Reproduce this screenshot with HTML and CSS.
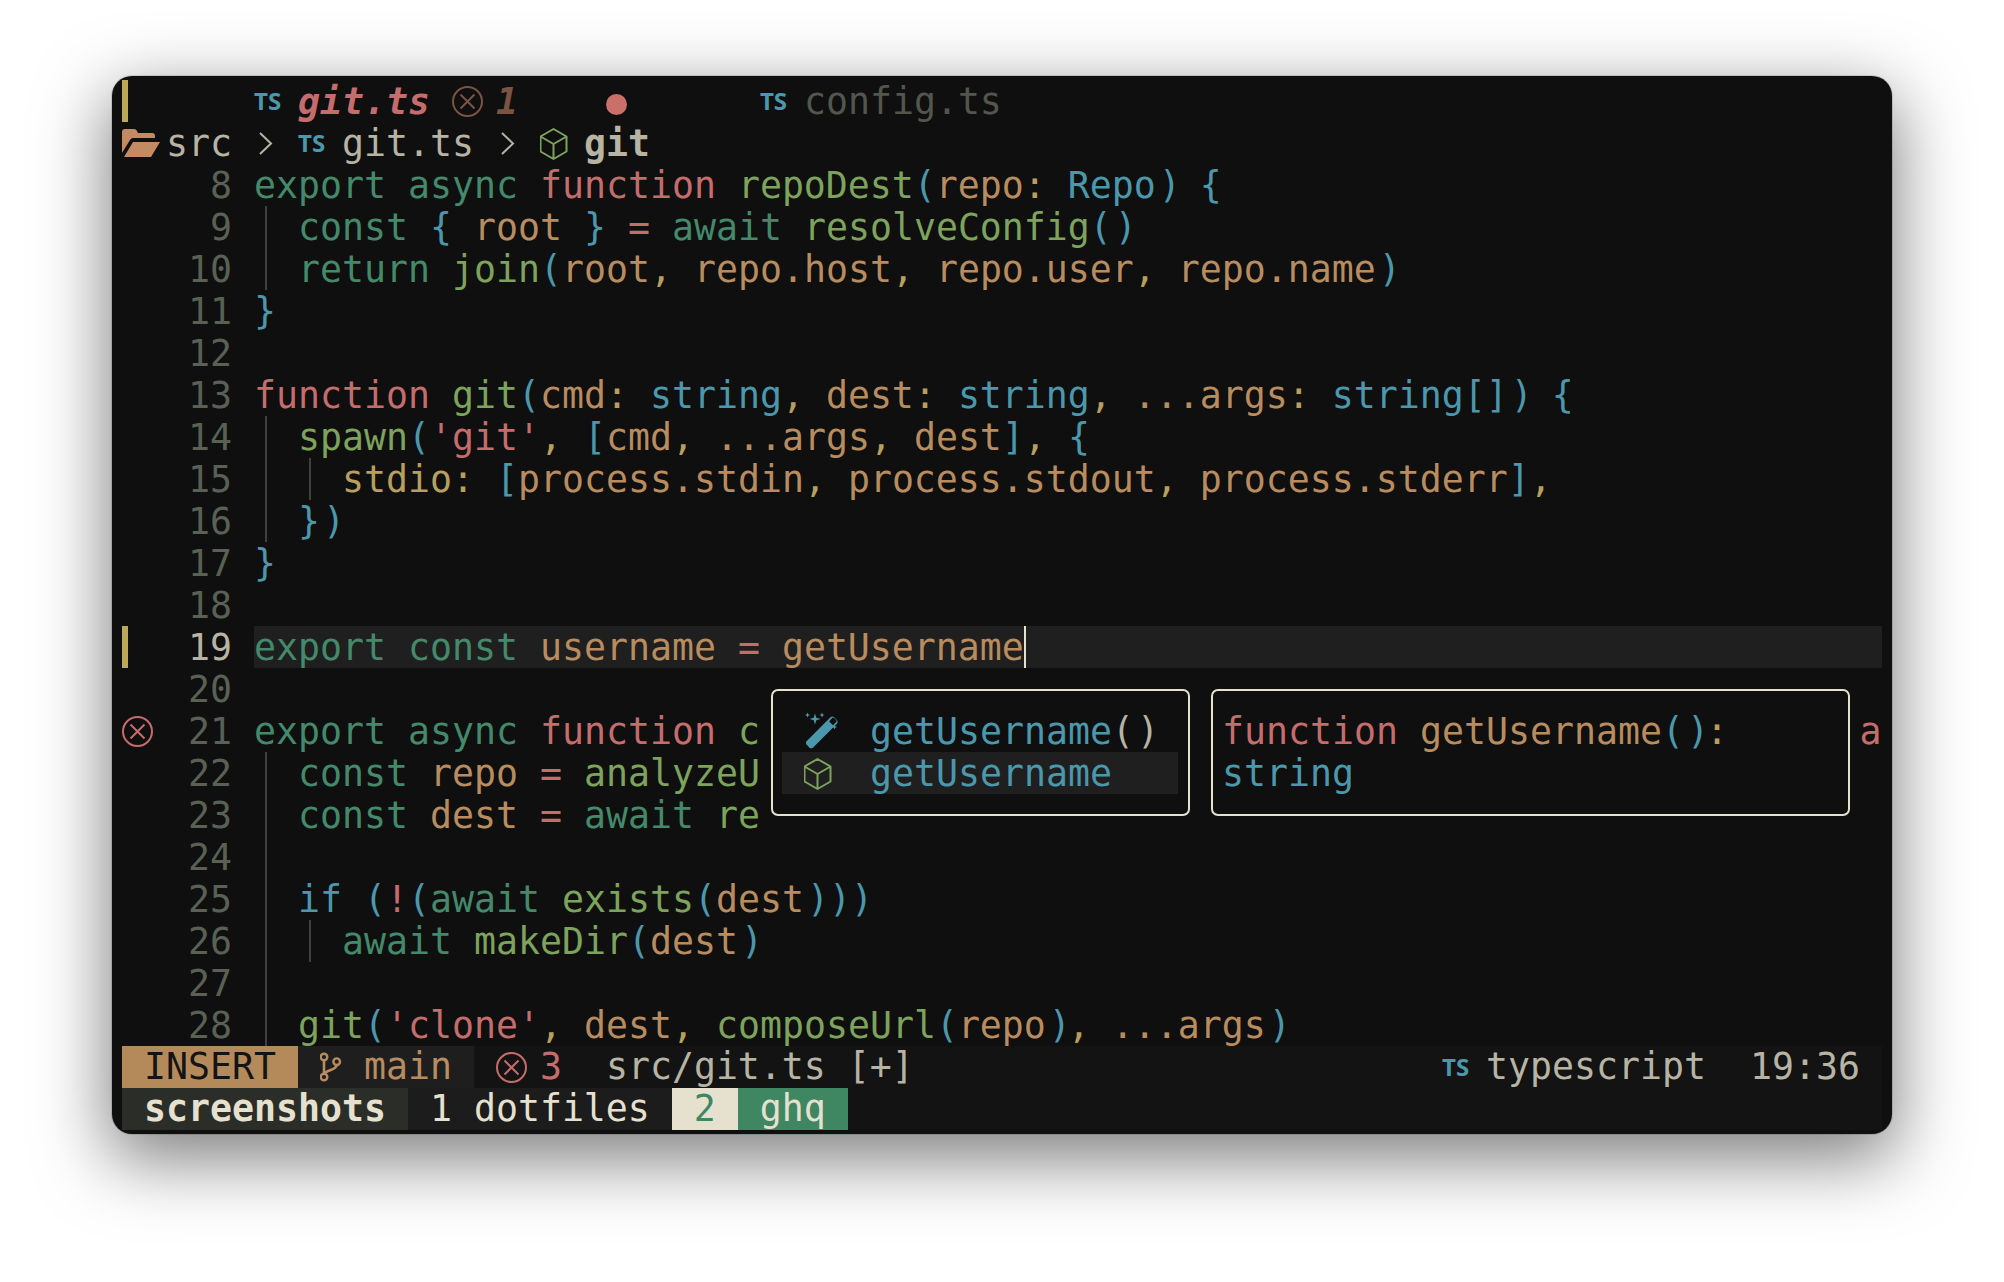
FILE: index.html
```html
<!DOCTYPE html>
<html lang="en">
<head>
<meta charset="utf-8">
<title>git.ts</title>
<link rel="stylesheet" href="styles.css">
</head>
<body>
<main class="window">
  <svg class="defs" width="0" height="0" aria-hidden="true">
    <defs>
      <g id="err"><circle cx="15.5" cy="21.5" r="14.5" fill="none" stroke="currentColor" stroke-width="2"/><path d="M8.500 14.500L22.500 28.500M22.500 14.500L8.500 28.500" fill="none" stroke="currentColor" stroke-width="2"/></g>
      <g id="cube"><path d="M13.5 1L26.5 8.5V23.5L13.5 31L.5 23.5V8.5ZM.5 8.5L13.5 16L26.5 8.5M13.5 16V31" fill="none" stroke="currentColor" stroke-width="2" stroke-linejoin="round"/></g>
      <path id="chev" d="M6 11L17 21.5L6 32" fill="none" stroke="currentColor" stroke-width="2"/>
    </defs>
  </svg>
  <div class="grid">
    <div class="row">
      <span class="sign"><span class="bar"></span></span><span class="num"></span><span class="code"><span class="ts">TS</span><span class="tabname">git.ts</span> <svg class="ic2 brown"><use href="#err"/></svg><span class="tabcount">1</span>    <span class="dot"></span>      <span class="ts">TS</span><span class="dim">config.ts</span></span>
    </div>
    <div class="row fg"><span class="code"><svg class="ic2 folder" viewBox="0 0 44 42"><path d="M0 10Q0 7 3 7H12Q14 7 15 9L16 11H30Q33 11 33 14V16H11Q9 16 8 18L0 31Z"/><path d="M2 35L11 20H38L29 35Z"/></svg>src <svg class="ic1"><use href="#chev"/></svg> <span class="ts">TS</span>git.ts <svg class="ic1"><use href="#chev"/></svg> <svg class="ic2 green"><g transform="translate(0 6)"><use href="#cube"/></g></svg><span class="bold">git</span></span></div>

    <div class="row"><span class="sign"></span><span class="num">8</span><span class="code"><i class="k">export async</i> <i class="r">function</i> <i class="f">repoDest</i><i class="b">(</i><i class="v">repo</i><i class="y">:</i> <i class="b">Repo<i class="cp">)</i> {</i></span></div>
    <div class="row"><span class="sign"></span><span class="num">9</span><span class="code"><span class="g"></span> <i class="k">const</i> <i class="b">{</i> <i class="v">root</i> <i class="b">}</i> <i class="r">=</i> <i class="k">await</i> <i class="f">resolveConfig</i><i class="b">(<i class="cp">)</i></i></span></div>
    <div class="row"><span class="sign"></span><span class="num">10</span><span class="code"><span class="g"></span> <i class="k">return</i> <i class="f">join</i><i class="b">(</i><i class="v">root</i><i class="y">,</i> <i class="v">repo.host</i><i class="y">,</i> <i class="v">repo.user</i><i class="y">,</i> <i class="v">repo.name</i><i class="b cp">)</i></span></div>
    <div class="row"><span class="sign"></span><span class="num">11</span><span class="code"><i class="b">}</i></span></div>
    <div class="row"><span class="sign"></span><span class="num">12</span><span class="code"></span></div>
    <div class="row"><span class="sign"></span><span class="num">13</span><span class="code"><i class="r">function</i> <i class="f">git</i><i class="b">(</i><i class="v">cmd</i><i class="y">:</i> <i class="b">string</i><i class="y">,</i> <i class="v">dest</i><i class="y">:</i> <i class="b">string</i><i class="y">,</i> <i class="v">...args</i><i class="y">:</i> <i class="b">string[]<i class="cp">)</i> {</i></span></div>
    <div class="row"><span class="sign"></span><span class="num">14</span><span class="code"><span class="g"></span> <i class="f">spawn</i><i class="b">(</i><i class="r">'git'</i><i class="y">,</i> <i class="b">[</i><i class="v">cmd</i><i class="y">,</i> <i class="v">...args</i><i class="y">,</i> <i class="v">dest</i><i class="b">]</i><i class="y">,</i> <i class="b">{</i></span></div>
    <div class="row"><span class="sign"></span><span class="num">15</span><span class="code"><span class="g"></span> <span class="g"></span> <i class="y">stdio:</i> <i class="b">[</i><i class="v">process.stdin</i><i class="y">,</i> <i class="v">process.stdout</i><i class="y">,</i> <i class="v">process.stderr</i><i class="b">]</i><i class="y">,</i></span></div>
    <div class="row"><span class="sign"></span><span class="num">16</span><span class="code"><span class="g"></span> <i class="b">}<i class="cp">)</i></i></span></div>
    <div class="row"><span class="sign"></span><span class="num">17</span><span class="code"><i class="b">}</i></span></div>
    <div class="row"><span class="sign"></span><span class="num">18</span><span class="code"></span></div>
    <div class="row"><span class="sign"><span class="bar"></span></span><span class="num current">19</span><span class="code cursorline"><i class="k">export const</i> <i class="v">username</i> <i class="r">=</i> <i class="v">getUsername</i><span class="cursor"></span></span></div>
    <div class="row"><span class="sign"></span><span class="num">20</span><span class="code"></span></div>
    <div class="row"><span class="sign"><svg class="ic2 red"><use href="#err"/></svg></span><span class="num">21</span><span class="code"><i class="k">export async</i> <i class="r">function</i> <i class="f">c</i>                                                  <i class="r">a</i></span></div>
    <div class="row"><span class="sign"></span><span class="num">22</span><span class="code"><span class="g"></span> <i class="k">const</i> <i class="v">repo</i> <i class="r">=</i> <i class="f">analyzeU</i></span></div>
    <div class="row"><span class="sign"></span><span class="num">23</span><span class="code"><span class="g"></span> <i class="k">const</i> <i class="v">dest</i> <i class="r">=</i> <i class="k">await</i> <i class="f">re</i></span></div>
    <div class="row"><span class="sign"></span><span class="num">24</span><span class="code"><span class="g"></span></span></div>
    <div class="row"><span class="sign"></span><span class="num">25</span><span class="code"><span class="g"></span> <i class="b">if (</i><i class="r">!</i><i class="b">(</i><i class="k">await</i> <i class="f">exists</i><i class="b">(</i><i class="v">dest</i><i class="b cp">)))</i></span></div>
    <div class="row"><span class="sign"></span><span class="num">26</span><span class="code"><span class="g"></span> <span class="g"></span> <i class="k">await</i> <i class="f">makeDir</i><i class="b">(</i><i class="v">dest</i><i class="b cp">)</i></span></div>
    <div class="row"><span class="sign"></span><span class="num">27</span><span class="code"><span class="g"></span></span></div>
    <div class="row"><span class="sign"></span><span class="num">28</span><span class="code"><span class="g"></span> <i class="f">git</i><i class="b">(</i><i class="r">'clone'</i><i class="y">,</i> <i class="v">dest</i><i class="y">,</i> <i class="f">composeUrl</i><i class="b">(</i><i class="v">repo</i><i class="b cp">)</i><i class="y">,</i> <i class="v">...args</i><i class="b cp">)</i></span></div>

    <div class="row bar-row">
      <span class="seg mode"> INSERT </span><span class="seg branch"> <svg class="ic1 orange" viewBox="0 0 22 42"><path d="M4 14V28M16.700 19C16.700 24 6 24 4 28" fill="none" stroke="currentColor" stroke-width="2.600"/><circle cx="4" cy="11" r="3.300" fill="none" stroke="currentColor" stroke-width="2.400"/><circle cx="16.700" cy="15.700" r="3.300" fill="none" stroke="currentColor" stroke-width="2.400"/><circle cx="4" cy="31" r="3.300" fill="none" stroke="currentColor" stroke-width="2.400"/></svg> main </span><span class="seg fg"> <svg class="ic2 red"><use href="#err"/></svg><i class="r">3</i>  src/git.ts [+]</span><span class="seg fg right"><span class="ts">TS</span>typescript  19:36 </span>
    </div>
    <div class="row bar-row">
      <span class="seg session bold"> screenshots </span><span class="seg win"> 1 dotfiles </span><span class="seg tabnum"> 2 </span><span class="seg tabcur"> ghq </span>
    </div>

    <div class="popup pop-menu">
      <div class="item"><svg class="ic3 blue" viewBox="0 0 66 42"><path d="M2.500 31.200L26.200 7.600Q28.300 5.600 30.400 7.600L32.600 9.800Q34.600 11.900 32.600 14L8.900 37.700Q7.200 39 5.600 37.700L2.500 34.600Q1.200 32.900 2.500 31.200Z"/><path d="M25.200 11.500L29 15.300L32.200 12.100Q33.200 11.100 32.200 10.100L30.100 8Q29.100 7 28.100 8Z" fill="#0f0f0f"/><path d="M11 2.500L12.300 6.700L16.500 8L12.300 9.300L11 13.500L9.700 9.300L5.500 8L9.700 6.700ZM3.500 1.500L4.200 3.300L6 4L4.200 4.700L3.500 6.500L2.800 4.700L1 4L2.800 3.300ZM18 1.500L18.700 3.300L20.500 4L18.700 4.700L18 6.500L17.300 4.700L15.500 4L17.300 3.300ZM30.500 13.500L31.200 15.300L33 16L31.200 16.700L30.500 18.500L29.800 16.700L28 16L29.800 15.300Z" transform="translate(0 1)"/></svg><span class="b">getUsername</span><span class="fg">(<i class="cp">)</i></span></div>
      <div class="item selected"><svg class="ic3 green"><g transform="translate(0 6)"><use href="#cube"/></g></svg><span class="b">getUsername</span></div>
    </div>
    <div class="popup pop-doc">
      <div class="item"><i class="r">function</i> <i class="v">getUsername</i><i class="b">(<i class="cp">)</i></i><i class="y">:</i></div>
      <div class="item"><i class="b">string</i></div>
    </div>
  </div>
</main>
</body>
</html>
```

FILE: styles.css
```css
* { box-sizing: border-box; }

html, body { margin: 0; background: #fff; }

body {
  min-height: 1282px;
  padding: 76px 112px 0;
  overflow: hidden;
  font-family: "DejaVu Sans Mono", "Liberation Mono", monospace;
  font-size: 36.54px;
  line-height: 44px;
  color: #b7b4a4;
}

.defs { position: absolute; }

.window {
  width: 1780px;
  height: 1058px;
  padding: 4px 10px;
  background: #0f0f0f;
  border-radius: 20px;
  box-shadow: 0 22px 70px 4px rgba(0, 0, 0, .5), 0 0 0 1px rgba(0, 0, 0, .12);
}

.grid { position: relative; width: 1760px; }

.row {
  display: flex;
  height: 42px;
  white-space: pre;
}

i { font-style: normal; }

.cp { display: inline-block; transform: translateX(3px); }

.sign { width: 44px; flex: none; }
.num { width: 66px; margin-right: 22px; flex: none; text-align: right; color: #596155; }
.num.current { color: #b7b4a4; }
.code { flex: 1; min-width: 0; }
.cursorline { background: #1f1f1f; }
.bar { display: block; width: 6px; height: 42px; background: #bca85a; }
.cursor { display: inline-block; width: 2px; height: 42px; vertical-align: top; background: #e6e1cf; }

.g {
  display: inline-block;
  width: 22px;
  height: 42px;
  vertical-align: top;
  background: linear-gradient(#3e4339, #3e4339) 11px 0 / 2px 100% no-repeat;
}

.k { color: #44896a; }
.r { color: #c56c6c; }
.f { color: #7da35c; }
.v { color: #b88c5e; }
.b { color: #4b98ad; }
.y { color: #b79f5e; }
.fg { color: #b7b4a4; }
.dim { color: #52574d; }
.bold { font-weight: 700; }

.ts {
  display: inline-block;
  width: 44px;
  vertical-align: top;
  font-family: "Open Sans", "Noto Sans", sans-serif;
  font-size: 24px;
  font-weight: 700;
  line-height: 42px;
  color: #4b98ad;
}

.ic1, .ic2, .ic3 { display: inline-block; height: 42px; vertical-align: top; }
.ic1 { width: 22px; }
.ic2 { width: 44px; }
.ic3 { width: 66px; flex: none; }
.red { color: #c56c6c; }
.brown { color: #7a5343; }
.green { color: #7da35c; }
.orange { color: #b88c5e; }
.blue { color: #4b98ad; fill: #4b98ad; }
.folder { fill: #c48a62; }

.tabname { font-weight: 700; font-style: italic; color: #c56c6c; }
.tabcount { font-weight: 700; font-style: italic; color: #7a5343; }
.dot {
  display: inline-block;
  width: 21px;
  height: 21px;
  margin: 14px 1px 7px 0;
  vertical-align: top;
  border-radius: 50%;
  background: #cb7069;
}

.bar-row { background: #131313; line-height: 42px; }
.seg { display: block; height: 42px; }
.mode { background: #b58a5a; color: #141414; }
.branch { background: #1e1e1e; color: #b88c5e; }
.right { margin-left: auto; }
.session { background: #2b2d28; color: #e6e1cf; }
.win { background: #1c1c1c; color: #e6e1cf; }
.tabnum { background: #e6e1cf; color: #3f8763; }
.tabcur { background: #3f8763; color: #e6e1cf; }

.popup {
  position: absolute;
  top: 609px;
  display: flex;
  flex-direction: column;
  height: 127px;
  padding-top: 19px;
  background: #0f0f0f;
  border: 2px solid #e6e1cf;
  border-radius: 7px;
  white-space: pre;
}

.pop-menu { left: 649px; width: 419px; padding-left: 9px; padding-right: 10px; }
.pop-doc { left: 1089px; width: 639px; padding-left: 9px; }
.pop-menu .item { padding-left: 22px; }
.item { display: flex; flex: none; height: 42px; }
.item.selected { background: #1f1f1f; }
.pop-doc .item { display: block; }
```
